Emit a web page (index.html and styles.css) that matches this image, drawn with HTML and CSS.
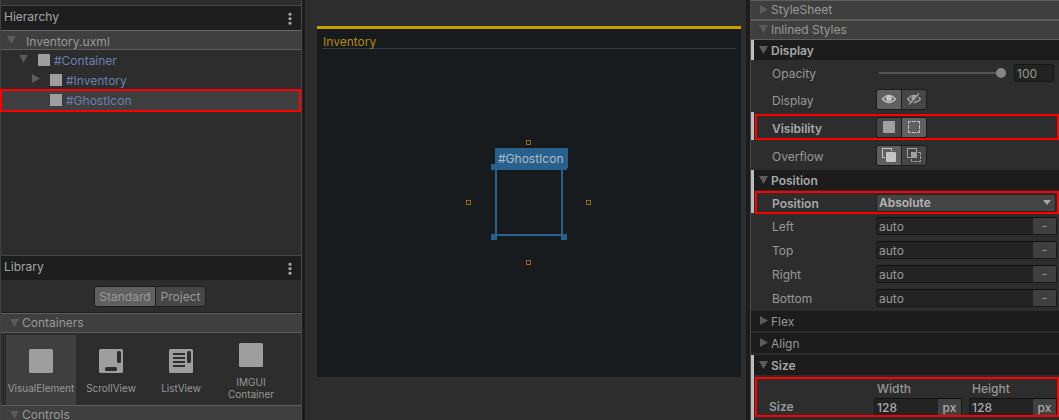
FILE: index.html
```html
<!DOCTYPE html>
<html lang="en">
<head>
<meta charset="utf-8">
<title>UI Builder</title>
<link rel="stylesheet" href="styles.css">
</head>
<body>
<div class="app">
  <aside class="left">
    <div class="strip"></div>
    <header class="panel-head"><span>Hierarchy</span><i class="kebab"></i></header>
    <div class="file-row"><i class="tri down"></i><span>Inventory.uxml</span></div>
    <div class="tree">
      <div class="node n1"><i class="tri down"></i><i class="box"></i><span>#Container</span></div>
      <div class="node n2"><i class="tri closed"></i><i class="box"></i><span>#Inventory</span></div>
      <div class="node n3"><i class="box"></i><span>#GhostIcon</span></div>
    </div>
    <header class="panel-head library"><span>Library</span><i class="kebab"></i></header>
    <div class="tabs"><div class="segment"><b class="on">Standard</b><b>Project</b></div></div>
    <div class="group"><i class="tri down"></i><span>Containers</span></div>
    <div class="tiles">
      <div class="tile active"><svg width="24" height="24"><rect width="24" height="24" rx="1.5" fill="#9e9e9e"/></svg><span>VisualElement</span></div>
      <div class="tile"><svg width="24" height="24"><rect width="24" height="24" rx="1.5" fill="#9e9e9e"/><rect x="18" y="2" width="4" height="12" rx="1.5" fill="#2d2d2d"/><rect x="6" y="18" width="12" height="4" rx="1.5" fill="#2d2d2d"/></svg><span>ScrollView</span></div>
      <div class="tile"><svg width="24" height="24"><rect width="24" height="24" rx="1.5" fill="#9e9e9e"/><rect x="18" y="2" width="4" height="12" rx="1.5" fill="#2d2d2d"/><path d="M4 5h12M4 9h12M4 13h12M4 17h12" stroke="#2d2d2d" stroke-width="2"/></svg><span>ListView</span></div>
      <div class="tile two"><svg width="24" height="24"><rect width="24" height="24" rx="1.5" fill="#9e9e9e"/></svg><span>IMGUI<br>Container</span></div>
    </div>
    <div class="group last"><i class="tri down"></i><span>Controls</span></div>
    <div class="mark mark-ghost"></div>
  </aside>
  <div class="gutter"></div>
  <main class="viewport">
    <div class="canvas">
      <div class="canvas-title">Inventory</div>
      <div class="selection">
        <i class="handle tl"></i><i class="handle tr"></i><i class="handle bl"></i><i class="handle br"></i>
        <span class="tag">#GhostIcon</span>
      </div>
      <i class="anchor a-top"></i><i class="anchor a-left"></i><i class="anchor a-right"></i><i class="anchor a-bottom"></i>
    </div>
  </main>
  <div class="gutter wide"></div>
  <aside class="inspector">
    <div class="fold light"><i class="tri closed"></i><span>StyleSheet</span></div>
    <div class="fold light"><i class="tri down"></i><span>Inlined Styles</span></div>
    <div class="fold set h20"><i class="tri down"></i><span>Display</span></div>
    <div class="row opacity"><label>Opacity</label><div class="slider"><i></i></div><div class="number">100</div></div>
    <div class="row display"><label>Display</label>
      <div class="toggle">
        <b class="on"><svg width="16" height="16" fill="none"><path d="M1.5 8Q8 .8 14.5 8Q8 15.2 1.5 8Z" stroke="#c4c4c4" stroke-width="1.2"/><circle cx="8" cy="7.4" r="3" fill="#c4c4c4"/></svg></b>
        <b><svg width="16" height="16" fill="none"><path d="M1.5 8Q8 .8 14.5 8Q8 15.2 1.5 8Z" stroke="#a0a0a0" stroke-width="1.2"/><circle cx="8" cy="7.5" r="2.7" fill="#a0a0a0"/><path d="M4 14L14 3" stroke="#464646" stroke-width="1.5"/><path d="M3 13.5L13 2.5" stroke="#a0a0a0" stroke-width="1.3"/></svg></b>
      </div></div>
    <div class="row visibility set"><label>Visibility</label>
      <div class="toggle">
        <b><svg width="16" height="16"><rect x="2" y="2" width="12" height="12" rx="1" fill="#a0a0a0"/></svg></b>
        <b class="on"><svg width="16" height="16" fill="none" stroke="#c4c4c4"><path d="M2.5 5V2.5H5M6 2.5H10M11 2.5H13.5V5M13.5 6V10M13.5 11V13.5H11M10 13.5H6M5 13.5H2.5V11M2.5 10V6"/></svg></b>
      </div></div>
    <div class="row overflow"><label>Overflow</label>
      <div class="toggle">
        <b class="on"><svg width="16" height="16"><rect x="1.5" y="1.5" width="9" height="9" fill="none" stroke="#c4c4c4"/><rect x="4" y="4" width="11" height="11" rx="1" fill="#606060"/><rect x="5" y="5" width="10" height="10" rx="1" fill="#c4c4c4"/></svg></b>
        <b><svg width="16" height="16"><rect x="1.5" y="1.5" width="9" height="9" fill="none" stroke="#a0a0a0"/><rect x="5" y="5" width="5" height="5" fill="#a0a0a0"/><path d="M12 5.5H14.5V8M14.5 9V12M14.5 13V14.5H12M11 14.5H8M7 14.5H5.5V12" fill="none" stroke="#a0a0a0"/></svg></b>
      </div></div>
    <div class="fold set h20"><i class="tri down"></i><span>Position</span></div>
    <div class="row position set"><label>Position</label><div class="dropdown"><span>Absolute</span><i></i></div></div>
    <div class="row field"><label>Left</label><div class="input"><span>auto</span><em>-</em></div></div>
    <div class="row field"><label>Top</label><div class="input"><span>auto</span><em>-</em></div></div>
    <div class="row field"><label>Right</label><div class="input"><span>auto</span><em>-</em></div></div>
    <div class="row field"><label>Bottom</label><div class="input"><span>auto</span><em>-</em></div></div>
    <div class="fold dark"><i class="tri closed"></i><span>Flex</span></div>
    <div class="fold dark"><i class="tri closed"></i><span>Align</span></div>
    <div class="fold set h20"><i class="tri down"></i><span>Size</span></div>
    <div class="size set">
      <label>Size</label>
      <div class="dim"><span>Width</span><div class="input"><span>128</span><em>px</em></div></div>
      <div class="dim"><span>Height</span><div class="input"><span>128</span><em>px</em></div></div>
    </div>
    <div class="mark mark-visibility"></div>
    <div class="mark mark-position"></div>
    <div class="mark mark-size"></div>
  </aside>
</div>
</body>
</html>
```

FILE: styles.css
```css
* { box-sizing: border-box; }
body {
  margin: 0;
  background: #2d2d2d;
  color: #989898;
  font: 12px/18px Inter, sans-serif;
  overflow: hidden;
}
i, em, b { font-style: normal; font-weight: 400; }
svg { display: block; flex: none; }
.app { display: flex; width: 1059px; height: 420px; overflow: hidden; }

/* shared marks */
.tri { width: 9px; height: 8px; background: #5c5c5c; flex: none; }
.tri.down { clip-path: polygon(0 0, 100% 0, 50% 100%); }
.tri.closed { width: 8px; height: 9px; clip-path: polygon(0 0, 100% 50%, 0 100%); }
.mark { position: absolute; border: 2px solid #f00; pointer-events: none; }

/* left column */
.left { position: relative; width: 302px; height: 420px; border-left: 1px solid #414141; border-right: 1px solid #484848; display: flex; flex-direction: column; flex: none; }
.strip { height: 5px; flex: none; }
.panel-head { height: 25px; flex: none; border-top: 1px solid #464646; background: #1e1e1e; display: flex; justify-content: space-between; padding: 2px 9px 0 3px; color: #a5a5a5; }
.kebab { width: 4px; height: 13px; margin-top: 4px; background: radial-gradient(circle at center, #a8a8a8 1.3px, transparent 1.9px) 0 0 / 4px 4.5px; }
.file-row { height: 20px; flex: none; border-top: 1px solid #686868; border-bottom: 1px solid #5e5e5e; background: #3f3f3f; display: flex; padding-left: 6px; gap: 10px; line-height: 21px; font-size: 12.1px; }
.file-row .tri { margin-top: 5px; }
.tree { height: 205px; flex: none; color: #6b80b3; }
.node { height: 20px; display: flex; align-items: center; }
.node .box { width: 12px; height: 12px; background: #9e9e9e; margin-right: 4px; }
.node span { padding-top: 1px; }
.n1 { padding-left: 18px; }
.n1 .tri { margin: -3px 10px 0 0; }
.n2 { padding-left: 31px; }
.n2 .tri { margin: -3px 10px 0 0; }
.n3 { padding-left: 49px; background: #3f3f3f; }
.mark-ghost { left: -1px; top: 89px; width: 301px; height: 23px; }
.tabs { height: 33px; flex: none; border-bottom: 1px solid #1e1e1e; display: flex; justify-content: center; padding: 6px 2px 0 0; }
.segment { display: flex; height: 21px; border: 1px solid #1d1d1d; border-radius: 3px; overflow: hidden; background: #1d1d1d; gap: 1px; }
.segment b { width: 49px; background: #464646; text-align: center; line-height: 20px; }
.segment .on { width: 60px; background: #606060; }
.group { height: 20px; flex: none; border-top: 1px solid #5e5e5e; border-bottom: 1px solid #5e5e5e; background: #3f3f3f; display: flex; gap: 3px; padding-left: 9px; }
.group .tri { margin-top: 5px; }
.tiles { height: 72px; flex: none; display: flex; padding: 2px 0 0 5px; }
.tile { width: 70px; height: 70px; padding-top: 14px; display: flex; flex-direction: column; align-items: center; font-size: 10px; line-height: 12px; gap: 9px; text-align: center; }
.tile.active { background: #3f3f3f; }
.tile.two { padding-top: 8px; }

/* canvas */
.gutter { width: 3px; background: #1c1c1c; flex: none; }
.gutter.wide { width: 4px; }
.viewport { width: 441px; flex: none; padding: 26px 5px 0 12px; }
.canvas { position: relative; height: 351px; border-top: 3px solid #cc9d00; background: #171b1e; padding: 3px 5px; }
.canvas-title { height: 17px; border-bottom: 1px solid #353d48; color: #b18b0e; padding-left: 1px; line-height: 19px; }
.selection { position: absolute; left: 178px; top: 139px; width: 68px; height: 68px; border: 2px solid #28608e; }
.tag { position: absolute; left: -2px; top: -22px; width: 73px; height: 20px; background: #28608e; color: #b3bcc4; padding-left: 3px; line-height: 21px; }
.handle { position: absolute; width: 6px; height: 6px; background: #28608e; }
.tl { left: -6px; top: -6px; }
.tr { right: -6px; top: -6px; }
.bl { left: -6px; bottom: -6px; }
.br { right: -6px; bottom: -6px; }
.anchor { position: absolute; width: 5px; height: 5px; border: 1px solid #94691c; }
.a-top { left: 209px; top: 111px; }
.a-left { left: 149px; top: 171px; }
.a-right { left: 269px; top: 171px; }
.a-bottom { left: 209px; top: 231px; }

/* inspector */
.inspector { position: relative; flex: 1; border-left: 1px solid #484848; }
.fold { display: flex; padding-left: 8px; }
.fold .tri { width: 9px; margin: 6px 3px 0 0; }
.fold .tri.closed { width: 8px; margin: 5px 3px 0 1px; }
.fold.light { height: 20px; background: #3f3f3f; border-top: 1px solid #5e5e5e; border-bottom: 1px solid #5e5e5e; }
.fold.light .tri { margin-top: 4px; }
.h20 { height: 20px; background: #1c1c1c; line-height: 21px; }
.fold.dark { height: 20px; background: #1c1c1c; margin-bottom: 2px; line-height: 21px; }
.set { box-shadow: inset 3px 0 #bdbdbd; font-weight: 600; color: #a8a8a8; }
.row { display: flex; }
.row label { width: 105px; padding-left: 21px; flex: none; margin-right: 20px; }
.opacity { height: 27px; padding-top: 4px; }
.slider { width: 122px; height: 2px; margin: 8px 0 0 3px; background: #555; position: relative; }
.slider i { position: absolute; right: -5px; top: -4px; width: 10px; height: 10px; border-radius: 50%; background: #858585; }
.number { width: 40px; height: 18px; margin-left: 13px; background: #232323; border: 1px solid #171717; border-radius: 2px; padding-left: 2px; line-height: 18px; }
.opacity label { line-height: 20px; }
.display { height: 25px; padding-top: 2px; }
.visibility { height: 28px; padding-top: 5px; }
.overflow { height: 30px; padding-top: 5px; }
.display label, .visibility label, .overflow label { line-height: 23px; }
.toggle { display: flex; width: 51px; height: 21px; border: 1px solid #1d1d1d; border-radius: 3px; overflow: hidden; background: #1d1d1d; gap: 1px; }
.toggle b { flex: 1; display: flex; align-items: flex-start; justify-content: center; padding-top: 1px; background: #464646; }
.toggle .on { background: #606060; }
.position { height: 23px; padding-top: 4px; line-height: 20px; }
.dropdown { width: 180px; height: 18px; background: #444; border: 1px solid #242424; border-radius: 2px; display: flex; justify-content: space-between; padding: 0 4px 0 2px; line-height: 16px; color: #b5b5b5; }
.dropdown i { width: 8px; height: 5px; margin-top: 5px; background: #a8a8a8; clip-path: polygon(0 0, 100% 0, 50% 100%); }
.field { height: 24px; padding-top: 4px; line-height: 20px; }
.field:has(+ .dark) { height: 26px; }
.input { width: 181px; height: 18px; display: flex; justify-content: space-between; background: #232323; border: 1px solid #191919; border-top-color: #0f0f0f; border-radius: 2px; padding-left: 2px; line-height: 18px; }
.input em { width: 23px; background: #404040; text-align: center; line-height: 15px; }
.size { height: 45px; display: flex; color: #989898; }
.size label { width: 123px; padding: 23px 0 0 18px; }
.dim { display: flex; flex-direction: column; width: 95px; padding-top: 5px; line-height: 18px; font-weight: 500; }
.dim > span { padding-left: 3px; }
.dim .input { width: 88px; font-weight: 500; color: #aaa; }
.dim .input em { font-weight: 500; line-height: 17px; }
.mark-visibility { left: 4px; top: 114px; width: 304px; height: 26px; }
.mark-position { left: 4px; top: 191px; width: 304px; height: 23px; }
.mark-size { left: 4px; top: 377px; width: 304px; height: 40px; }
```
